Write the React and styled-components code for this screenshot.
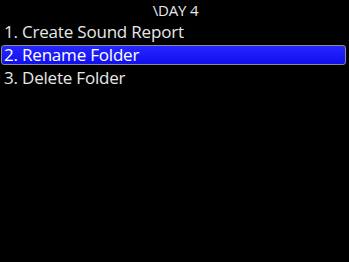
import React from "react";
import styled, { createGlobalStyle } from "styled-components";

const Global = createGlobalStyle`
  html, body { margin: 0; padding: 0; background: #000; }
  body { width: 349px; height: 262px; overflow: hidden; }
`;

const Screen = styled.div`
  width: 349px;
  height: 262px;
  background: #000;
  color: #e8e8e8;
  font-family: "Open Sans", "DejaVu Sans", sans-serif;
  display: flex;
  flex-direction: column;
`;

const Title = styled.div`
  height: 20px;
  display: flex;
  justify-content: center;
  align-items: center;
  font-size: 15px;
  line-height: 20px;
  padding-left: 2px;
  letter-spacing: -0.2px;
`;

const Menu = styled.ul`
  list-style: none;
  margin: 2px 0 0 0;
  padding: 0 3px 0 1px;
  display: flex;
  flex-direction: column;
  gap: 3px;
`;

const Item = styled.li`
  height: 18px;
  display: flex;
  align-items: center;
  padding-left: 2px;
  font-size: 17px;
  line-height: 18px;
  letter-spacing: -0.2px;
  border-radius: 3px;
  border: 1px solid ${(p) => (p.$selected ? "#8a8a96" : "transparent")};
  background: ${(p) =>
    p.$selected ? "linear-gradient(#2626ff, #1010ee)" : "transparent"};
  color: ${(p) => (p.$selected ? "#fff" : "#e8e8e8")};
`;

const items = ["1. Create Sound Report", "2. Rename Folder", "3. Delete Folder"];

export default function App() {
  return (
    <>
      <Global />
      <Screen>
        <Title>\DAY 4</Title>
        <Menu>
          {items.map((t, i) => (
            <Item key={t} $selected={i === 1}>
              {t}
            </Item>
          ))}
        </Menu>
      </Screen>
    </>
  );
}
